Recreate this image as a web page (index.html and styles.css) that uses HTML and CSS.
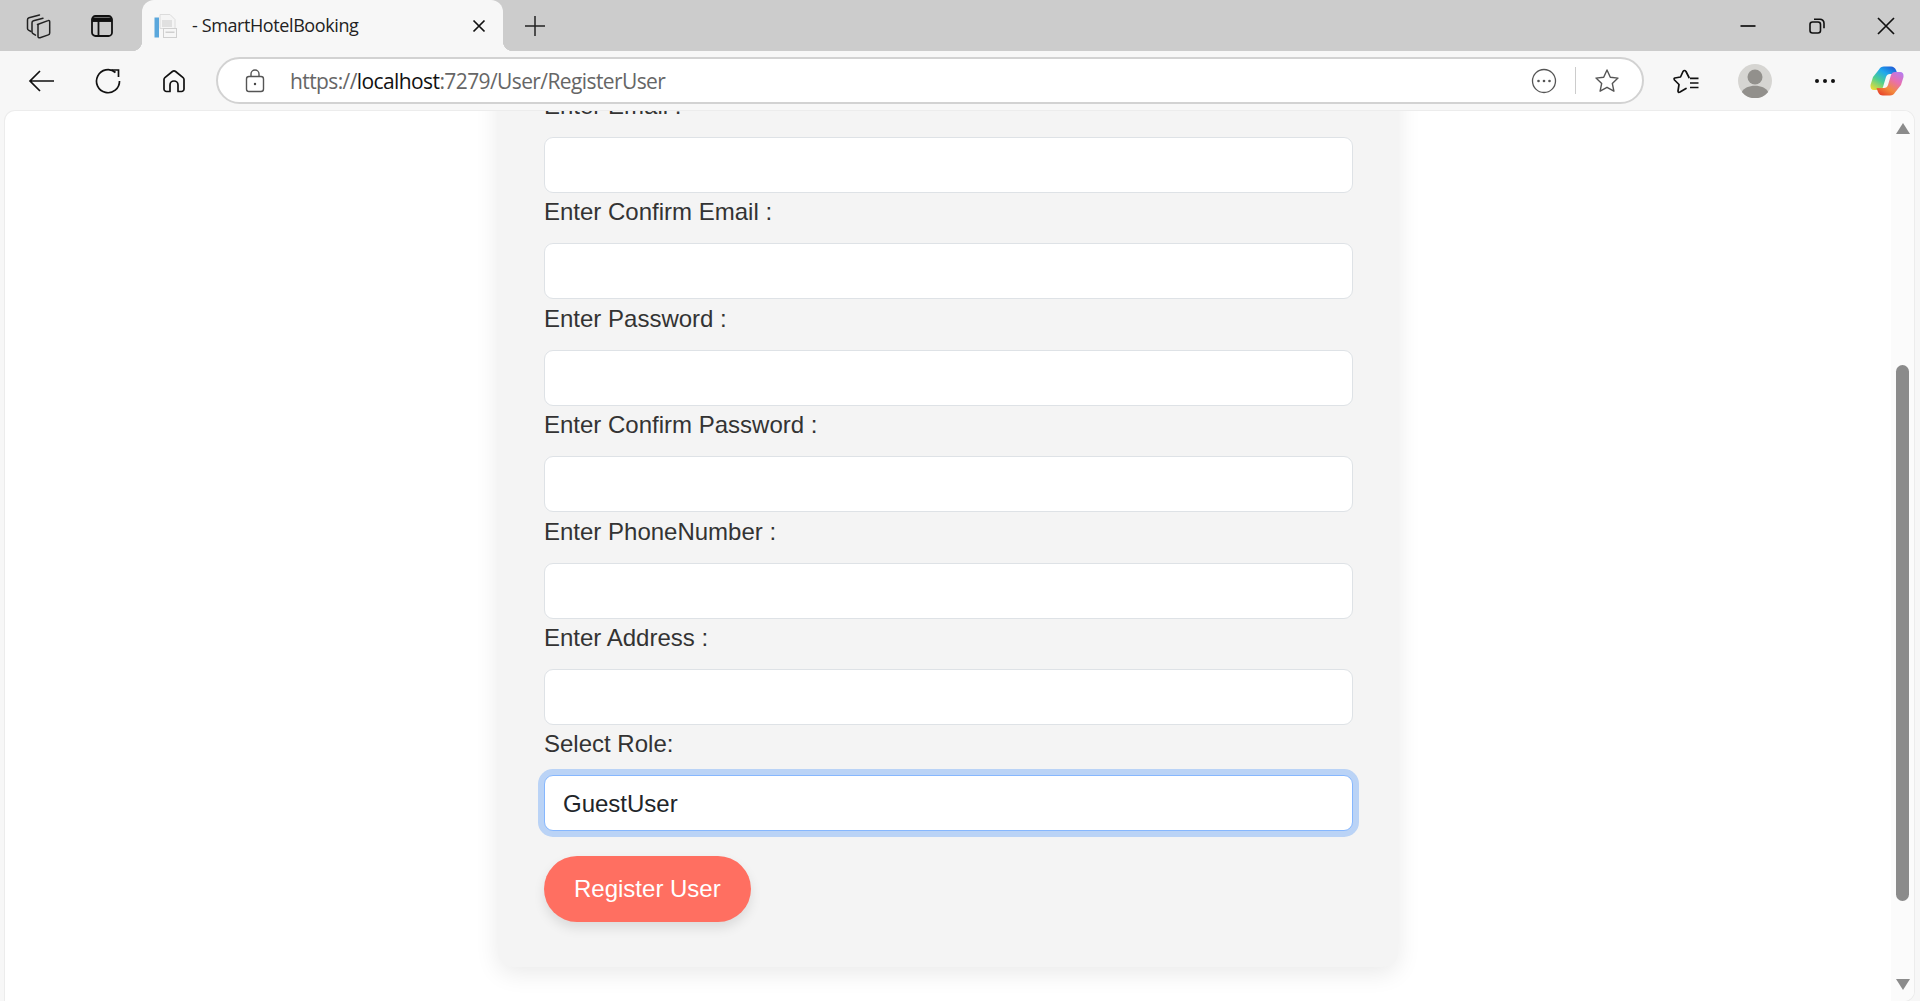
FILE: index.html
```html
<!DOCTYPE html>
<html>
<head>
  <meta charset="UTF-8">
  <title>SmartHotelBooking</title>
  <link rel="stylesheet" href="styles.css">
</head>
<body>
  <!-- browser window: tabs -->
  <div class="tabstrip">
    <div class="strip-icons">
      <span class="strip-btn">
        <svg width="26" height="26" viewBox="0 0 26 26" fill="none" stroke="#222" stroke-width="1.500" stroke-linejoin="round" stroke-linecap="round"><path d="M12.500 11.500 23 7.600a1.200 1.200 0 0 1 1.700 1.200V20a2 2 0 0 1-1.400 1.900l-8.300 2.800a1.400 1.400 0 0 1-2-1.300V13.500a2 2 0 0 1 .5-2z"/><path d="M18 5.300 8.500 7.800a2 2 0 0 0-1.500 2V19a2 2 0 0 0 1 1.700l2.500 1.500"/><path d="M14.500 2 4 4.800a2 2 0 0 0-1.500 2V15.500a2 2 0 0 0 1 1.700L6 18.500"/></svg>
      </span>
      <span class="strip-btn">
        <svg width="24" height="24" viewBox="0 0 24 24" fill="none" stroke="#111" stroke-width="1.800"><rect x="2" y="2" width="20" height="20" rx="3.500"/><path d="M2.500 3.500h19v4h-19z" fill="#111" stroke="none"/><path d="M2 7h20"/><path d="M8.500 7v15"/></svg>
      </span>
    </div>
    <div class="tab">
      <svg class="favicon" width="26" height="26" viewBox="0 0 26 26"><rect x="1.500" y="4.500" width="4.500" height="20" fill="#5aa7dc"/><path d="M7 1.500h10l5 5v9H7z" fill="#f5f5f5" stroke="#dcdcdc"/><rect x="9" y="7" width="10" height="7" fill="#e0e0e0"/><rect x="10.500" y="15.500" width="13" height="9" fill="#f6f6f6" stroke="#cfcfcf"/><rect x="12.500" y="18.500" width="9" height="1.500" fill="#cfcfcf"/></svg>
      <span class="tab-title">- SmartHotelBooking</span>
      <svg class="tab-close" width="16" height="16" viewBox="0 0 16 16" stroke="#111" stroke-width="1.700"><path d="M2.500 2.500l11 11M13.500 2.500l-11 11"/></svg>
    </div>
    <span class="strip-btn new-tab">
      <svg width="24" height="24" viewBox="0 0 24 24" stroke="#222" stroke-width="1.500"><path d="M12 2v20M2 12h20"/></svg>
    </span>
    <div class="window-btns">
      <span class="win-btn"><svg width="18" height="18" viewBox="0 0 18 18" stroke="#111" stroke-width="1.700"><path d="M1.500 9h15"/></svg></span>
      <span class="win-btn"><svg width="18" height="18" viewBox="0 0 18 18" fill="none" stroke="#111" stroke-width="1.600"><rect x="2" y="5" width="10.500" height="11" rx="2.500"/><path d="M6 2.200h6a4 4 0 0 1 4 4v5"/></svg></span>
      <span class="win-btn"><svg width="18" height="18" viewBox="0 0 18 18" stroke="#111" stroke-width="1.700"><path d="M1 1l16 16M17 1L1 17"/></svg></span>
    </div>
  </div>

  <!-- browser window: address bar -->
  <div class="toolbar">
    <span class="tool-btn first">
      <svg width="28" height="28" viewBox="0 0 28 28" fill="none" stroke="#111" stroke-width="1.700"><path d="M26 14H2M12 4 2 14l10 10"/></svg>
    </span>
    <span class="tool-btn">
      <svg width="28" height="28" viewBox="0 0 28 28" fill="none" stroke="#111" stroke-width="1.700"><path d="M21.500 5.500A11.500 11.500 0 1 0 25.500 14"/><path d="M17.500 3H24.500V10"/></svg>
    </span>
    <span class="tool-btn">
      <svg width="26" height="26" viewBox="0 0 26 26" fill="none" stroke="#111" stroke-width="1.700" stroke-linejoin="round"><path d="M3 11.500a2.500 2.500 0 0 1 .9-1.900L11.400 3.500a2.500 2.500 0 0 1 3.200 0l7.500 6.100a2.500 2.500 0 0 1 .9 1.900V21a2.500 2.500 0 0 1-2.500 2.500H17V17a4 4 0 0 0-8 0v6.500H5.500A2.500 2.500 0 0 1 3 21z"/></svg>
    </span>
    <div class="addressbar">
      <svg class="lock" width="22" height="26" viewBox="0 0 22 26" fill="none" stroke="#555" stroke-width="1.400"><rect x="2.500" y="8.500" width="17" height="15" rx="2.500"/><path d="M7 8.500V6a4 4 0 0 1 8 0v2.500"/><circle cx="11" cy="16" r="1.200" fill="#444" stroke="none"/></svg>
      <span class="url"><span class="url-dim">https://</span>localhost<span class="url-dim">:7279/User/RegisterUser</span></span>
      <svg class="addr-icon" width="26" height="26" viewBox="0 0 26 26" fill="none" stroke="#555" stroke-width="1.300"><circle cx="13" cy="13" r="11.500"/><circle cx="7.500" cy="13" r="1.300" fill="#555" stroke="none"/><circle cx="13" cy="13" r="1.300" fill="#555" stroke="none"/><circle cx="18.500" cy="13" r="1.300" fill="#555" stroke="none"/></svg>
      <span class="addr-sep"></span>
      <svg class="addr-icon" width="26" height="26" viewBox="0 0 26 26" fill="none" stroke="#555" stroke-width="1.400" stroke-linejoin="round"><path d="M13 2l3.300 7.200 7.700.9-5.700 5.300 1.600 7.800L13 19.300l-6.900 3.900 1.600-7.800L2 10.100l7.700-.9z"/></svg>
    </div>
    <span class="tool-btn fav">
      <svg width="26" height="26" viewBox="0 0 26 26" fill="none" stroke="#111" stroke-width="1.700" stroke-linejoin="round" stroke-linecap="round"><path d="M16 9.500 13 3.500Q11.500 1.500 10 3.500L7.500 9 1.800 10Q.5 10.500 1.500 12L6 16.500 5 23Q5 25 7 24L13 20.500"/><path d="M17 10.300h8.500M17 15h8.500M17 19.500h8.500" stroke-linecap="butt"/></svg>
    </span>
    <span class="avatar">
      <svg width="34" height="34" viewBox="0 0 34 34"><circle cx="17" cy="17" r="17" fill="#d6d5d2"/><circle cx="17" cy="13" r="7.500" fill="#92908c"/><path d="M3.800 28C6 24 11 21.800 17 21.800S28 24 30.200 28A17 17 0 0 1 3.800 28z" fill="#92908c"/></svg>
    </span>
    <span class="tool-btn more">
      <svg width="22" height="6" viewBox="0 0 22 6" fill="#111"><circle cx="3" cy="3" r="2"/><circle cx="11" cy="3" r="2"/><circle cx="19" cy="3" r="2"/></svg>
    </span>
    <span class="copilot">
      <svg width="34" height="30" viewBox="0 0 34 30">
        <defs>
          <linearGradient id="cpA" x1=".8" y1="0" x2=".1" y2="1"><stop offset="0" stop-color="#1e5fd8"/><stop offset=".3" stop-color="#1fa8ee"/><stop offset=".62" stop-color="#4fcf90"/><stop offset="1" stop-color="#efdc34"/></linearGradient>
          <linearGradient id="cpB" x1=".8" y1="0" x2=".1" y2="1"><stop offset="0" stop-color="#e8452c"/><stop offset=".3" stop-color="#f38a3c"/><stop offset=".65" stop-color="#e86fb0"/><stop offset="1" stop-color="#b57cf0"/></linearGradient>
        </defs>
        <path d="M9 3.500Q10.500.5 14 .5H21Q24.500.5 26 4L27.500 8H20Q17 8 16 11L13 21Q12 24 9 24H4Q0 24 .5 19L3 11Z" fill="url(#cpA)"/>
        <path d="M9 3.500Q10.500.5 14 .5H21Q24.500.5 26 4L27.500 8H20Q17 8 16 11L13 21Q12 24 9 24H4Q0 24 .5 19L3 11Z" fill="url(#cpB)" transform="rotate(180 17 15)"/>
      </svg>
    </span>
  </div>

  <!-- page -->
  <div class="viewport">
    <div class="page">
      <form class="card">
        <div class="field">
          <label>Enter Email :</label>
          <input class="form-control" type="text">
        </div>
        <div class="field">
          <label>Enter Confirm Email :</label>
          <input class="form-control" type="text">
        </div>
        <div class="field">
          <label>Enter Password :</label>
          <input class="form-control" type="password">
        </div>
        <div class="field">
          <label>Enter Confirm Password :</label>
          <input class="form-control" type="password">
        </div>
        <div class="field">
          <label>Enter PhoneNumber :</label>
          <input class="form-control" type="text">
        </div>
        <div class="field">
          <label>Enter Address :</label>
          <input class="form-control" type="text">
        </div>
        <div class="field">
          <label>Select Role:</label>
          <select class="form-control focused">
            <option>GuestUser</option>
          </select>
        </div>
        <button class="register-btn" type="button">Register User</button>
      </form>
    </div>
    <div class="scrollbar">
      <span class="arrow-up"></span>
      <div class="track"><div class="thumb"></div></div>
      <span class="arrow-down"></span>
    </div>
  </div>
</body>
</html>
```

FILE: styles.css
```css
html, body {
  height: 100%;
}
body {
  margin: 0;
  overflow: hidden;
  display: flex;
  flex-direction: column;
  background-color: #f7f7f7;
  font-family: 'Open Sans', 'Noto Sans', sans-serif;
}

/* Tab strip */
.tabstrip {
  height: 51px;
  flex: none;
  display: flex;
  align-items: center;
  background-color: #cccccc;
}
.strip-icons {
  width: 142px;
  display: flex;
  padding-left: 24px;
  box-sizing: border-box;
  gap: 36px;
}
.strip-btn {
  display: flex;
  align-items: center;
  justify-content: center;
  width: 28px;
  height: 28px;
}
.tab {
  position: relative;
  width: 361px;
  height: 51px;
  display: flex;
  align-items: center;
  background-color: #f7f7f7;
  border-radius: 12px 12px 0 0;
}
/* little curved feet at the bottom of the tab */
.tab::before, .tab::after {
  content: "";
  position: absolute;
  bottom: 0;
  width: 10px;
  height: 10px;
}
.tab::before {
  left: -10px;
  background: radial-gradient(circle at 0 0, #cccccc 10px, #f7f7f7 10.5px);
}
.tab::after {
  right: -10px;
  background: radial-gradient(circle at 100% 0, #cccccc 10px, #f7f7f7 10.5px);
}
.favicon {
  margin-left: 11px;
}
.tab-title {
  margin-left: 13px;
  margin-bottom: 2px;
  font-size: 18px;
  letter-spacing: -0.4px;
  color: #222;
  flex: 1;
}
.tab-close {
  margin-right: 16px;
}
.new-tab {
  margin-left: 18px;
}
.window-btns {
  margin-left: auto;
  display: flex;
  align-items: center;
  padding-right: 25px;
  gap: 51px;
}
.win-btn {
  display: flex;
  width: 18px;
  height: 18px;
}

/* Toolbar */
.toolbar {
  height: 60px;
  flex: none;
  display: flex;
  align-items: center;
  box-sizing: border-box;
  padding-bottom: 1px;
  background-color: #f7f7f7;
}
.tool-btn {
  display: flex;
  align-items: center;
  justify-content: center;
  width: 66px;
}
.tool-btn.first {
  margin-left: 9px;
}
.addressbar {
  width: 1428px;
  height: 47px;
  margin-left: 9px;
  box-sizing: border-box;
  display: flex;
  align-items: center;
  background-color: #fff;
  border: 2px solid #d2d2d2;
  border-radius: 24px;
}
.lock {
  margin-left: 26px;
}
.url {
  margin-left: 24px;
  flex: 1;
  font-size: 21px;
  letter-spacing: -0.6px;
  color: #111;
}
.url-dim {
  color: #666;
}
.addr-sep {
  width: 1px;
  height: 27px;
  margin: 0 18px 0 18px;
  background-color: #ccc;
}
.addr-icon:last-child {
  margin-right: 22px;
}
.tool-btn.fav {
  margin-left: 9px;
}
.avatar {
  display: flex;
  margin-left: 19px;
}
.tool-btn.more {
  margin-left: 20px;
}
.copilot {
  display: flex;
  margin-left: 12px;
}

/* Viewport, holds the scrolled page and its scrollbar */
.viewport {
  flex: 1;
  min-height: 0;
  display: flex;
  margin: 0 6px 0 5px;
  background-color: #fff;
  border-radius: 10px 10px 10px 0;
  overflow: hidden;
  box-shadow: 0 0 0 1px #ececec;
}
.page {
  flex: 1;
  min-width: 0;
  overflow: hidden;
}
.card {
  width: 900px;
  box-sizing: border-box;
  margin: -40px auto 0;
  padding: 21px 45px 45px 46px;
  background-color: #f4f4f4;
  border-radius: 15px;
  box-shadow: 0 6px 24px rgba(0, 0, 0, 0.09);
}
.field {
  margin-bottom: 5.4px;
}
.field label {
  display: block;
  height: 27px;
  line-height: 27px;
  margin-bottom: 18px;
  font-family: 'Liberation Sans', Arial, sans-serif;
  font-size: 24px;
  color: #333;
}
.form-control {
  display: block;
  width: 100%;
  height: 56px;
  box-sizing: border-box;
  padding: 0 18px;
  background-color: #fff;
  border: 1.5px solid #dee2e6;
  border-radius: 9px;
  font-family: 'Liberation Sans', Arial, sans-serif;
  font-size: 24px;
  color: #212529;
  appearance: none;
}
.form-control.focused {
  border-color: #86b7fe;
  outline: 0;
  box-shadow: 0 0 0 6px rgba(13, 110, 253, 0.25);
}
.register-btn {
  display: block;
  height: 66px;
  margin-top: 24.6px;
  padding: 0 30px;
  background-color: #ff6f61;
  border: 0;
  border-radius: 33px;
  font-family: 'Liberation Sans', Arial, sans-serif;
  font-size: 24px;
  color: #fff;
  box-shadow: 0 6px 12px rgba(0, 0, 0, 0.1);
}

/* Scrollbar */
.scrollbar {
  width: 23px;
  flex: none;
  display: flex;
  flex-direction: column;
  align-items: center;
  background-color: #fbfbfb;
}
.arrow-up, .arrow-down {
  width: 0;
  height: 0;
  flex: none;
  border-left: 7.5px solid transparent;
  border-right: 7.5px solid transparent;
}
.arrow-up {
  margin-top: 12px;
  border-bottom: 11px solid #8b8b8b;
}
.arrow-down {
  margin-bottom: 11px;
  border-top: 11px solid #8b8b8b;
}
.track {
  flex: 1;
  width: 13px;
  padding-top: 231px;
}
.thumb {
  height: 536px;
  background-color: #8b8b8b;
  border-radius: 7px;
}
```
